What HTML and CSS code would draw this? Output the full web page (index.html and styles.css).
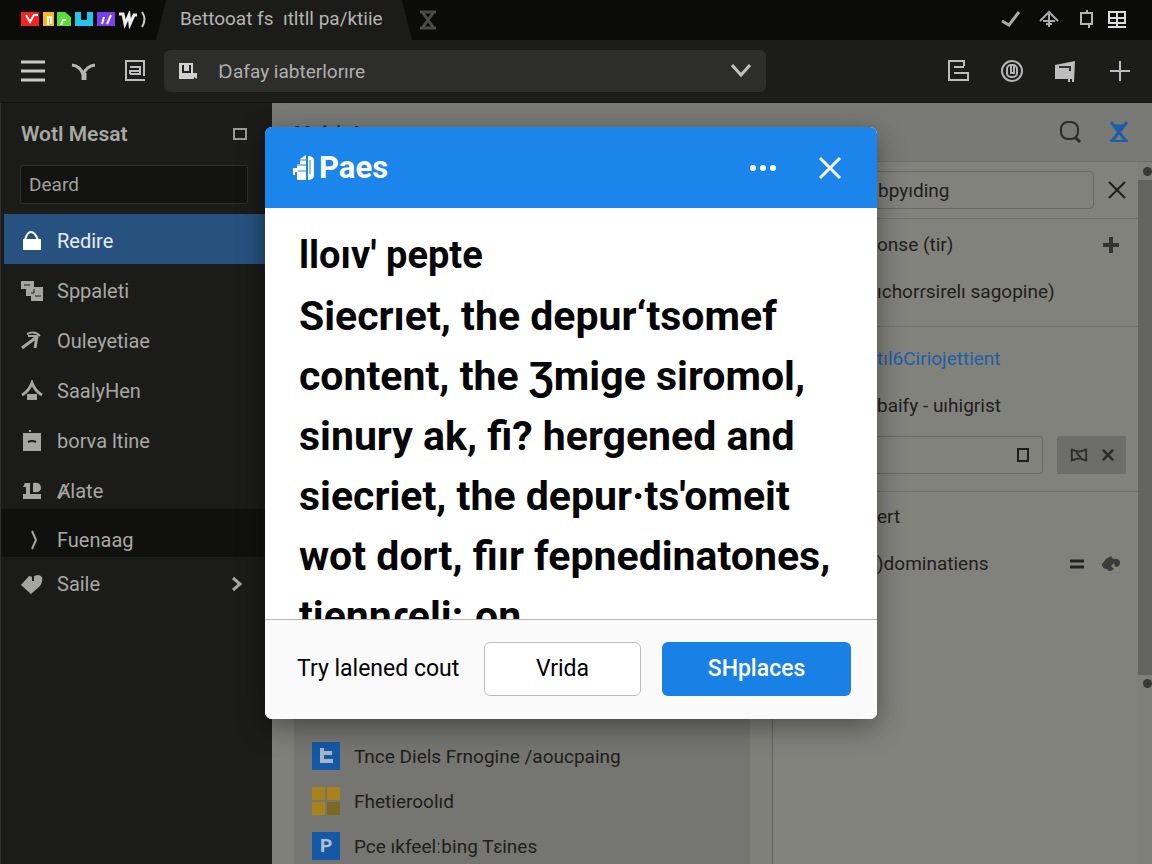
FILE: index.html
```html
<!DOCTYPE html>
<html lang="en">
<head>
    <meta charset="UTF-8">
    <meta name="viewport" content="width=device-width, initial-scale=1.0">
    <title>Paes</title>
    <link rel="stylesheet" href="styles.css">
</head>
<body>
    <header class="tab-strip">
        <div class="brand">
            <svg width="128" height="18" viewBox="0 0 128 18">
                <path fill="#f5231b" d="M0 1h18v14H0z"/>
                <path fill="#f6b81b" d="M22 1h11v14H22z"/>
                <path fill="#58de35" d="M36 1h8l6 5v9H36z"/>
                <path fill="#22c5ee" d="M54 1h18v14H54z"/>
                <path fill="#7d3df0" d="M76 1h18v14H76z"/>
                <path fill="none" stroke="#fff" stroke-width="2" d="M5 4l4 7 4-7h4M27 14V6h3v7M40 14l2-5h3M81 13l2-7M86 13l4-9"/>
                <path fill="#0b0b09" d="M60 1h6v8h-6z"/>
                <path fill="none" stroke="#eee" stroke-width="3" d="M98 3h4l2 10 4-9 1 9 4-9h3"/>
                <path fill="none" stroke="#ccc" stroke-width="2" d="M121 1q5 7 0 15"/>
            </svg>
        </div>
        <div class="tab">Bettooat fs &nbsp;ıtltll pa/ktiie</div>
        <button class="icon-btn tab-close" aria-label="Close tab">
            <svg width="18" height="20" viewBox="0 0 18 20" fill="none" stroke="#4a4a48" stroke-width="3"><path d="M1 2h16M1 18h16M4 3l10 14M14 3L4 17"/></svg>
        </button>
        <div class="window-icons">
            <svg width="20" height="20" viewBox="0 0 20 20" fill="none" stroke="#aaa" stroke-width="3"><path d="M1 11l7 4L18 2"/></svg>
            <svg width="20" height="20" viewBox="0 0 20 20" fill="none" stroke="#aaa" stroke-width="2"><path d="M1 11l9-9 9 9M10 4v13M4 11h12M7 14h6"/></svg>
            <svg width="20" height="20" viewBox="0 0 20 20" fill="none" stroke="#b5b5b5" stroke-width="2"><path d="M4 3h11v11H4zM10 0v3M12 14v4"/></svg>
            <svg width="20" height="20" viewBox="0 0 20 20" fill="none" stroke="#ddd" stroke-width="2"><path d="M2 2h16v11H2zM10 2v15M2 8h16M1 17h18"/></svg>
        </div>
    </header>

    <nav class="toolbar">
        <div class="toolbar-left">
            <button class="icon-btn" aria-label="Menu">
                <svg width="26" height="22" viewBox="0 0 26 22" fill="none" stroke="#c9c9c9" stroke-width="3"><path d="M1 2h24M1 11h24M1 20h24"/></svg>
            </button>
            <button class="icon-btn" aria-label="Branch">
                <svg width="26" height="22" viewBox="0 0 26 22" fill="none" stroke="#b5b5b5" stroke-width="3"><path d="M1 5q8 1 11 9 4-8 12-9"/><path stroke-width="5" d="M13 13v7"/></svg>
            </button>
            <button class="icon-btn" aria-label="Pages">
                <svg width="26" height="22" viewBox="0 0 26 22" fill="none" stroke="#bdbdbd" stroke-width="2"><path d="M22 16V1H4v19h19M8 7h10v7H8M8 14v-3h9"/></svg>
            </button>
        </div>
        <div class="address">
            <svg width="20" height="20" viewBox="0 0 20 20"><path fill="#d0d0d0" d="M1 2h14v10h4v6l-3-2v2H1z"/><path fill="none" stroke="#222" stroke-width="2" d="M5 4v7h7V4"/></svg>
            <input type="text" aria-label="Address" value="Ɒafay iabterlorıre">
            <button class="icon-btn" aria-label="Open list">
                <svg width="20" height="14" viewBox="0 0 20 14" fill="none" stroke="#c0c0c0" stroke-width="3"><path d="M1 1l9 10 9-10"/></svg>
            </button>
        </div>
        <div class="toolbar-right">
            <button class="icon-btn" aria-label="Layout">
                <svg width="24" height="24" viewBox="0 0 24 24" fill="none" stroke="#bdbdbd" stroke-width="2"><path d="M18 7V2H3v19h19v-7H8M8 8h10"/></svg>
            </button>
            <button class="icon-btn" aria-label="Account">
                <svg width="24" height="24" viewBox="0 0 24 24" fill="none" stroke="#b5b5b5" stroke-width="2"><circle cx="12" cy="12" r="10"/><rect x="7" y="6" width="10" height="12" rx="4"/><path d="M11 6v8h3V6"/></svg>
            </button>
            <button class="icon-btn" aria-label="Library">
                <svg width="24" height="24" viewBox="0 0 24 24"><path fill="#bdbdbd" d="M1 6l20-4-1 21h-2v-3h-2v3h-2v-3H1z"/><path fill="none" stroke="#333" stroke-width="2" d="M5 8h11v4"/></svg>
            </button>
            <button class="icon-btn" aria-label="New">
                <svg width="24" height="24" viewBox="0 0 24 24" fill="none" stroke="#bdbdbd" stroke-width="2"><path d="M12 2v20M2 12h20"/></svg>
            </button>
        </div>
    </nav>

    <div class="workspace">
        <aside class="sidebar">
            <div class="sidebar-head">
                <h2>Wotl Mesat</h2>
                <button class="icon-btn" aria-label="Collapse">
                    <svg width="14" height="14" viewBox="0 0 14 14" fill="none" stroke="#999" stroke-width="2"><path d="M1 2h12v10H1z"/></svg>
                </button>
            </div>
            <input class="sidebar-search" type="text" aria-label="Search" value="Deard">
            <ul class="menu">
                <li><a class="menu-item active" href="#">
                    <svg width="22" height="22" viewBox="0 0 22 22"><path fill="#fff" d="M2 9h18v11H2z"/><path fill="none" stroke="#fff" stroke-width="2" d="M4 10q2-8 6-8t7 8"/></svg>
                    Redire</a></li>
                <li><a class="menu-item" href="#">
                    <svg width="22" height="22" viewBox="0 0 22 22"><path fill="#a5a5a2" d="M0 1h13v6h9v14H10v-5H5V9H0z"/><path fill="none" stroke="#1b1c19" d="M3 5h6M13 9v4h-3M14 16h6"/></svg>
                    Sppaleti</a></li>
                <li><a class="menu-item" href="#">
                    <svg width="22" height="22" viewBox="0 0 22 22" fill="none" stroke="#a5a5a2" stroke-width="3"><path d="M1 18L17 6M16 6l-2 12"/><path stroke-width="2" d="M6 4q8-4 13 2M7 6h9"/></svg>
                    Ouleyetiae</a></li>
                <li><a class="menu-item" href="#">
                    <svg width="22" height="22" viewBox="0 0 22 22"><path fill="#a5a5a2" d="M6 14h10v6H6z"/><path fill="none" stroke="#a5a5a2" stroke-width="3" d="M1 15q7-4 10-12 3 8 10 12"/></svg>
                    SaalyHen</a></li>
                <li><a class="menu-item" href="#">
                    <svg width="22" height="22" viewBox="0 0 22 22"><path fill="#a5a5a2" d="M2 3h18v18H2zM8 0h2v2H8z"/><path fill="none" stroke="#1b1c19" stroke-width="2" d="M7 12q4-2 8 0"/></svg>
                    borva ltine</a></li>
                <li><a class="menu-item" href="#">
                    <svg width="22" height="22" viewBox="0 0 22 22"><path fill="#a5a5a2" d="M2 14h18v5H2zM4 3h5v11H5V7H2zM12 3q8-1 8 5 0 5-8 4z"/></svg>
                    Ⱥlate</a></li>
            </ul>
            <ul class="menu menu-extra">
                <li><a class="menu-item dark" href="#">
                    <svg width="22" height="22" viewBox="0 0 22 22" fill="none" stroke="#a5a5a2" stroke-width="2"><path d="M11 2l4 9-4 9"/></svg>
                    Fuenaag</a></li>
                <li><a class="menu-item tall" href="#">
                    <svg width="22" height="22" viewBox="0 0 22 22"><path fill="#a5a5a2" d="M0 12l8-9 4 1q5-4 9 0 1 5-2 9l-9 8z"/><path stroke="#1b1c19" stroke-width="2" d="M12 3v5"/></svg>
                    Saile
                    <svg class="chevron" width="10" height="16" viewBox="0 0 10 16" fill="none" stroke="#a5a5a2" stroke-width="3"><path d="M1 2l7 6-7 6"/></svg></a></li>
            </ul>
        </aside>

        <main class="page">
            <div class="page-head">
                <h1>Mɑin's Is</h1>
                <div class="page-actions">
                    <button class="icon-btn" aria-label="Find">
                        <svg width="24" height="24" viewBox="0 0 24 24" fill="none" stroke="#2b2b29" stroke-width="2"><rect x="3" y="2" width="17" height="17" rx="7"/><path stroke-width="3" d="M17 17l5 5"/></svg>
                    </button>
                    <button class="icon-btn" aria-label="Timer">
                        <svg width="24" height="24" viewBox="0 0 24 24" fill="none" stroke="#1d5cab" stroke-width="3"><path d="M4 2l15 19M20 2L5 21"/><path fill="#1d5cab" stroke-width="1" d="M7 5h10l-5 7z"/><path stroke-width="2" d="M3 21h18"/></svg>
                    </button>
                </div>
            </div>

            <div class="page-body">
                <section class="results">
                    <ul class="result-list">
                        <li>
                            <svg width="28" height="28" viewBox="0 0 28 28"><path fill="#1558a6" d="M0 0h28v28H0z"/><path fill="none" stroke="#a9b5c4" stroke-width="4" d="M10 6v13h11M10 11h10"/></svg>
                            Tnce Diels Frnogine /aoucpaing
                        </li>
                        <li>
                            <svg width="28" height="28" viewBox="0 0 28 28"><path fill="#a8821a" d="M0 0h13v13H0zM15 0h13v13H15zM0 15h13v13H0z"/><path fill="#7c6a22" d="M15 15h13v13H15z"/></svg>
                            Fhetieroolıd
                        </li>
                        <li>
                            <span class="tile">P</span>
                            Pce ıkfeelːbing Tɛines
                        </li>
                    </ul>
                </section>

                <section class="details">
                    <div class="group search-group">
                        <input type="text" class="field" aria-label="Filter" value="bpyıding">
                        <button class="icon-btn" aria-label="Clear">
                            <svg width="18" height="18" viewBox="0 0 18 18" fill="none" stroke="#1e1e1c" stroke-width="2"><path d="M1 1l16 16M17 1L1 17"/></svg>
                        </button>
                    </div>
                    <div class="group group-a">
                        <div class="row">onse (tir)
                            <button class="icon-btn row-end" aria-label="Add">
                                <svg width="18" height="18" viewBox="0 0 18 18" fill="none" stroke="#333331" stroke-width="4"><path d="M9 1v16M1 9h16"/></svg>
                            </button>
                        </div>
                        <div class="row">ıchorɾsirelı sagopine)</div>
                    </div>
                    <div class="group group-b">
                        <div class="row"><a href="#">tıl6Ciriojettient</a></div>
                        <div class="row">baify - uıhigrist</div>
                        <div class="combo">
                            <div class="combo-field">
                                <svg width="14" height="14" viewBox="0 0 14 14" fill="none" stroke="#1e1e1c" stroke-width="2"><path d="M2 1h10v12H2z"/></svg>
                            </div>
                            <button class="combo-btn" aria-label="Options">
                                <svg width="18" height="14" viewBox="0 0 20 14" fill="none" stroke="#2b2b29" stroke-width="2"><path d="M2 1l6 2h4l6-2v12l-6-2H8l-6 2zM7 4l5 6"/></svg>
                                <svg width="12" height="12" viewBox="0 0 14 14" fill="none" stroke="#2b2b29" stroke-width="3"><path d="M1 1l12 12M13 1L1 13"/></svg>
                            </button>
                        </div>
                    </div>
                    <div class="group group-c">
                        <div class="row">ert</div>
                        <div class="row">)dominatiens
                            <span class="row-end pair">
                                <svg width="14" height="12" viewBox="0 0 14 12" stroke="#222220" stroke-width="3"><path d="M0 3h14M0 9h14"/></svg>
                                <svg width="18" height="16" viewBox="0 0 18 16" fill="#3b3b39"><path d="M0 8l4-5 5-3 2 3q7-1 7 4 0 4-5 4l-1-4-3 3 3 3q-5 4-7 0-5 0-5-5z"/></svg>
                            </span>
                        </div>
                    </div>
                </section>

                <div class="scroll-track">
                    <span class="scroll-dot"></span>
                    <span class="scroll-thumb"></span>
                    <span class="scroll-dot"></span>
                </div>
            </div>
        </main>
    </div>

    <div class="overlay">
        <div class="dialog" role="dialog" aria-labelledby="dialog-title">
            <div class="dialog-head">
                <svg width="24" height="26" viewBox="0 0 24 26"><path fill="#fff" d="M8 4l6-4v25H5v-8H3v3H1v-7h4V9h3zM16 1q6 0 6 5v14q0 5-6 5z"/><path fill="none" stroke="#1b85ec" d="M6 5h8M5 10h9M6 16h8M18 5v14"/></svg>
                <h2 id="dialog-title">Paes</h2>
                <button class="icon-btn more" aria-label="More">
                    <svg width="28" height="8" viewBox="0 0 28 8" fill="#fff"><circle cx="4" cy="4" r="3"/><circle cx="14" cy="4" r="3"/><circle cx="24" cy="4" r="3"/></svg>
                </button>
                <button class="icon-btn" aria-label="Close">
                    <svg width="24" height="24" viewBox="0 0 24 24" fill="none" stroke="#fff" stroke-width="3"><path d="M2 2l20 20M22 2L2 22"/></svg>
                </button>
            </div>
            <div class="dialog-body">
                <h3>lloıv' pepte</h3>
                <p>Siecrıet, the depur‘tsomef<br>
                content, the Ʒmige siromol,<br>
                sinury ak, fi? hergened and<br>
                siecriet, the depur·ts'omeit<br>
                wot dort, fiır fepnedinatones,<br>
                tiennɾeli:.on</p>
            </div>
            <div class="dialog-foot">
                <span class="hint">Try lalened cout</span>
                <button class="btn">Vrida</button>
                <button class="btn primary">SHplaces</button>
            </div>
        </div>
    </div>
</body>
</html>
```
FILE: styles.css
```css
* {
    box-sizing: border-box;
}
body {
    margin: 0;
    height: 100vh;
    display: flex;
    flex-direction: column;
    overflow: hidden;
    font-family: Roboto, "Liberation Sans", sans-serif;
    font-size: 20px;
    background-color: #80807b;
}
h1, h2, h3, p, ul {
    margin: 0;
    padding: 0;
}
ul {
    list-style: none;
}
input, button {
    font: inherit;
}
svg {
    display: block;
    flex-shrink: 0;
}
.icon-btn {
    display: flex;
    padding: 0;
    border: 0;
    background: none;
}

/* Tabs */
.tab-strip {
    display: flex;
    align-items: center;
    height: 40px;
    flex-shrink: 0;
    background-color: #0b0b09;
}
.brand {
    width: 156px;
    padding-left: 21px;
    flex-shrink: 0;
}
.tab {
    width: 256px;
    height: 40px;
    padding: 0 24px;
    line-height: 38px;
    font-size: 19px;
    white-space: nowrap;
    color: #b5b5b3;
    background-color: #1b1b19;
    clip-path: polygon(4% 0, 96% 0, 100% 100%, 0 100%);
}
.tab-close {
    margin-left: 7px;
}
.window-icons {
    display: flex;
    gap: 18px;
    margin-left: auto;
    padding-right: 25px;
}
.window-icons svg:last-child {
    margin-left: -8px;
}

/* Toolbar */
.toolbar {
    display: flex;
    align-items: center;
    height: 63px;
    flex-shrink: 0;
    background-color: #1c1c1a;
    border-bottom: 1px solid #121210;
}
.toolbar-left {
    display: flex;
    gap: 25px;
    width: 164px;
    padding-left: 20px;
    flex-shrink: 0;
}
.address {
    display: flex;
    align-items: center;
    flex: 0 1 602px;
    height: 42px;
    padding: 0 15px 0 14px;
    background-color: #2d2d2b;
    border-radius: 6px;
}
.address input {
    flex: 1;
    min-width: 0;
    padding: 0 0 0 20px;
    border: 0;
    font-size: 19px;
    color: #b0b0ae;
    background: none;
}
.toolbar-right {
    display: flex;
    gap: 30px;
    margin-left: auto;
    padding-right: 20px;
}

/* Sidebar */
.workspace {
    display: flex;
    flex: 1;
    min-height: 0;
}
.sidebar {
    width: 272px;
    flex-shrink: 0;
    color: #a8a8a5;
    background-color: #1b1c19;
    border-left: 1px solid #30302e;
}
.sidebar-head {
    display: flex;
    align-items: center;
    justify-content: space-between;
    height: 62px;
    padding: 0 25px 0 20px;
}
.sidebar-head h2 {
    font-size: 21px;
    font-weight: 600;
}
.sidebar-search {
    display: block;
    width: 228px;
    height: 39px;
    margin: 0 0 10px 19px;
    padding: 0 8px;
    font-size: 19px;
    color: #a0a09d;
    background-color: #131311;
    border: 1px solid #2f2f2d;
    border-radius: 3px;
}
.menu-item {
    display: flex;
    align-items: center;
    gap: 14px;
    height: 50px;
    margin-left: 3px;
    padding: 4px 30px 0 17px;
    color: inherit;
    text-decoration: none;
}
.menu-item.active {
    color: #e6edf5;
    background-color: #27527f;
}
.menu-extra {
    margin-top: -5px;
}
.menu-item.dark {
    height: 48px;
    margin-left: 0;
    padding: 14px 0 0 20px;
    background-color: #10100f;
}
.menu-item.tall {
    height: 54px;
    padding-top: 0;
}
.chevron {
    margin-left: auto;
}

/* Page */
.page {
    display: flex;
    flex-direction: column;
    flex: 1;
    min-width: 0;
    font-size: 19px;
    color: #1e1e1c;
}
.page-head {
    display: flex;
    align-items: center;
    justify-content: space-between;
    height: 59px;
    flex-shrink: 0;
    padding: 0 21px 0 22px;
    background-color: #797975;
    border-bottom: 1px solid #6c6c69;
}
.page-head h1 {
    font-size: 19px;
    color: #1c2a44;
}
.page-actions {
    display: flex;
    gap: 25px;
}
.page-body {
    display: flex;
    flex: 1;
    min-height: 0;
}
.results {
    display: flex;
    flex: 1;
    padding: 0 22px;
    background-color: #80807b;
}
.result-list {
    display: flex;
    flex-direction: column;
    justify-content: flex-end;
    gap: 17px;
    width: 100%;
    padding: 0 18px 4px;
    background-color: #757571;
}
.result-list li {
    display: flex;
    align-items: center;
    gap: 14px;
    height: 28px;
    white-space: nowrap;
}
.tile {
    width: 28px;
    line-height: 28px;
    text-align: center;
    font-weight: bold;
    color: #b3bfcd;
    background-color: #1558a6;
}
.details {
    width: 366px;
    flex-shrink: 0;
    background-color: #82827d;
    border-left: 1px solid #62625f;
}
.group {
    padding-left: 104px;
    border-bottom: 1px solid #6f6f6b;
}
.search-group {
    display: flex;
    align-items: center;
    gap: 14px;
    height: 57px;
    padding: 0 12px 0 22px;
}
.field {
    flex: 1;
    min-width: 0;
    height: 38px;
    padding: 0 82px;
    color: inherit;
    background: none;
    border: 1px solid #686864;
    border-radius: 4px;
}
.row {
    display: flex;
    align-items: center;
    height: 47px;
    padding-right: 18px;
    white-space: nowrap;
}
.row a {
    color: #1f5da6;
    text-decoration: none;
}
.row-end {
    margin-left: auto;
}
.pair {
    display: flex;
    align-items: center;
    gap: 18px;
}
.group-a {
    padding-top: 2px;
    padding-bottom: 11px;
}
.group-b {
    padding-top: 8px;
    padding-bottom: 17px;
}
.combo {
    display: flex;
    gap: 14px;
    margin-top: 7px;
    padding-right: 12px;
}
.combo-field {
    display: flex;
    align-items: center;
    justify-content: flex-end;
    flex: 1;
    height: 38px;
    padding-right: 12px;
    margin-left: -80px;
    border: 1px solid #686864;
    border-radius: 3px;
}
.combo-btn {
    display: flex;
    align-items: center;
    justify-content: center;
    gap: 14px;
    width: 69px;
    padding: 0;
    background-color: #6d6d69;
    border: 0;
    border-radius: 2px;
}
.group-c {
    padding-top: 1px;
    border-bottom: 0;
}
.scroll-track {
    display: flex;
    flex-direction: column;
    align-items: flex-end;
    gap: 4px;
    width: 14px;
    padding-top: 5px;
    background-color: #80807b;
}
.scroll-thumb {
    width: 14px;
    height: 71%;
    background-color: #636360;
}
.scroll-dot {
    width: 9px;
    height: 9px;
    background-color: #383836;
    border-radius: 50%;
}

/* Dialog */
.overlay {
    position: absolute;
    inset: 0;
    display: flex;
    align-items: center;
    justify-content: center;
    padding: 0 10px 18px 0;
}
.dialog {
    width: 612px;
    max-width: 92%;
    overflow: hidden;
    background-color: #fff;
    border-radius: 7px;
    box-shadow: 0 8px 28px rgba(0, 0, 0, 0.4);
}
.dialog-head {
    display: flex;
    align-items: center;
    gap: 3px;
    height: 81px;
    padding: 0 35px 0 27px;
    color: #fff;
    background-color: #1b85ec;
}
.dialog-head h2 {
    font-size: 31px;
}
.dialog-head .more {
    margin: 0 38px 0 auto;
}
.dialog-body {
    height: 411px;
    padding: 16px 34px 0;
    overflow: hidden;
    font-size: 41px;
    font-weight: bold;
    line-height: 60px;
    white-space: nowrap;
    color: #050505;
}
.dialog-body h3 {
    font-size: 38px;
    line-height: 62px;
}
.dialog-foot {
    display: flex;
    align-items: center;
    gap: 21px;
    height: 100px;
    padding: 0 26px 2px 32px;
    font-size: 23px;
    background-color: #fafafa;
    border-top: 1px solid #b5b5b5;
}
.hint {
    margin-right: auto;
    white-space: nowrap;
}
.btn {
    width: 157px;
    height: 54px;
    background-color: #fff;
    border: 1px solid #bdbdbd;
    border-radius: 6px;
}
.btn.primary {
    width: 189px;
    color: #fff;
    font-weight: 500;
    background-color: #1980e6;
    border: 0;
}
```
